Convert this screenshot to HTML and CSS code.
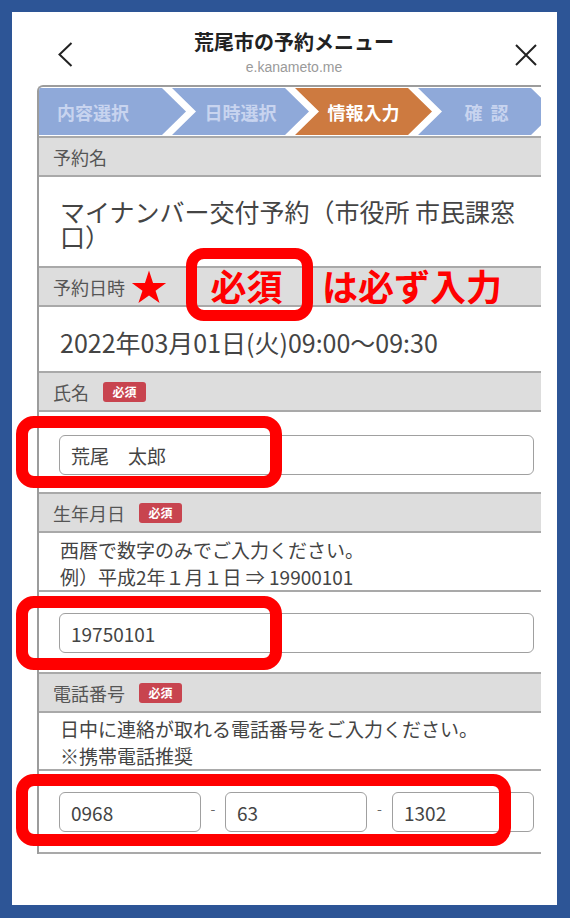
FILE: index.html
```html
<!DOCTYPE html>
<html lang="ja">
<head>
<meta charset="utf-8">
<title>荒尾市の予約メニュー</title>
<link rel="stylesheet" href="styles.css">
</head>
<body>
<div class="screen">
  <header class="topbar">
    <svg class="back" width="15" height="25" viewBox="0 0 15 25"><polyline points="13.5,1 1.5,12.5 13.5,24" fill="none" stroke="#222" stroke-width="2"/></svg>
    <div class="titles">
      <div class="title">荒尾市の予約メニュー</div>
      <div class="url">e.kanameto.me</div>
    </div>
    <svg class="close" width="22" height="22" viewBox="0 0 22 22"><path d="M1 1 L21 21 M21 1 L1 21" stroke="#222" stroke-width="2" fill="none"/></svg>
  </header>

  <div class="form">
    <div class="steps-wrap">
      <div class="steps">
        <div class="step first">内容選択</div>
        <div class="step">日時選択</div>
        <div class="step current">情報入力</div>
        <div class="step last">確 認</div>
      </div>
    </div>

    <div class="sec-head">予約名</div>
    <div class="sec-body big name-body">マイナンバー交付予約（市役所 市民課窓口）</div>

    <div class="sec-head">予約日時<svg class="star" width="36" height="34" viewBox="0 0 36 34"><polygon points="18,0.5 22.06,12.92 35.12,12.94 24.56,20.63 28.58,33.06 18,25.4 7.42,33.06 11.44,20.63 0.88,12.94 13.94,12.92" fill="#ff0000"/></svg></div>
    <div class="sec-body big date-body">2022年03月01日(火)09:00～09:30</div>

    <div class="sec-head">氏名<span class="badge">必須</span></div>
    <div class="sec-body input-body first-input">
      <input class="field" type="text" value="荒尾　太郎" readonly>
    </div>

    <div class="sec-head">生年月日<span class="badge">必須</span></div>
    <div class="sec-body help help1">西暦で数字のみでご入力ください。<br>例）平成2年１月１日 ⇒ 19900101</div>
    <div class="sec-body input-body second-input">
      <input class="field" type="text" value="19750101" readonly>
    </div>

    <div class="sec-head">電話番号<span class="badge">必須</span></div>
    <div class="sec-body help help2">日中に連絡が取れる電話番号をご入力ください。<br>※携帯電話推奨</div>
    <div class="sec-body phone-body">
      <input class="field tel" type="text" value="0968" readonly>
      <span class="dash">-</span>
      <input class="field tel" type="text" value="63" readonly>
      <span class="dash">-</span>
      <input class="field tel" type="text" value="1302" readonly>
    </div>
  </div>

  <div class="note-box">必須</div>
  <div class="note-text">は必ず入力</div>
  <div class="mark mark-name"></div>
  <div class="mark mark-birth"></div>
  <div class="mark mark-tel"></div>
</div>
</body>
</html>
```

FILE: styles.css
```css
html, body {
  margin: 0;
}
body {
  background: #2d5596;
  width: 570px;
  height: 918px;
  padding: 12px 13px 13px 12px;
  box-sizing: border-box;
  font-family: "Noto Sans CJK JP", "Noto Sans", sans-serif;
}
.screen {
  position: relative;
  background: #ffffff;
  height: 893px;
  overflow: hidden;
}

/* top bar */
.topbar {
  display: flex;
  height: 73px;
  padding: 0 20px 0 46px;
  box-sizing: border-box;
}
.back {
  flex: none;
  margin-top: 30px;
}
.titles {
  flex: 1;
  text-align: center;
  padding-top: 17px;
}
.title {
  font-size: 20px;
  line-height: 26px;
  font-weight: 700;
  color: #222;
}
.url {
  margin-top: 3px;
  font-family: "Liberation Sans", Arial, sans-serif;
  font-size: 14px;
  line-height: 18px;
  color: #9a9a9a;
}
.close {
  flex: none;
  margin-top: 32px;
}

/* form */
.form {
  margin-left: 25px;
  width: 504px;
  box-sizing: border-box;
  border-left: 2px solid #9c9c9c;
  border-top: 2px solid #9c9c9c;
  border-top-left-radius: 6px;
  overflow: hidden;
}
.steps-wrap {
  padding: 1px 0;
  border-bottom: 2px solid #a9a9a9;
}
.steps {
  display: flex;
  height: 47px;
}
.step {
  flex: none;
  width: 137px;
  margin-left: -14px;
  display: flex;
  align-items: center;
  justify-content: center;
  background: #8fa9d9;
  color: #c8d4ef;
  font-size: 18px;
  font-weight: 700;
  clip-path: polygon(0 0, calc(100% - 24px) 0, 100% 50%, calc(100% - 24px) 100%, 0 100%, 24px 50%);
}
.step.first {
  width: 147px;
  margin-left: 0;
  justify-content: flex-start;
  padding-left: 18px;
  box-sizing: border-box;
  clip-path: polygon(0 0, calc(100% - 24px) 0, 100% 50%, calc(100% - 24px) 100%, 0 100%);
}
.step.current {
  background: #cd7a40;
  color: #ffffff;
}
.step.last {
  word-spacing: 4px;
}

.sec-head {
  display: flex;
  align-items: center;
  height: 37px;
  padding-left: 14px;
  background: #dddddd;
  border-bottom: 2px solid #a9a9a9;
  font-size: 18px;
  color: #555;
}
.star {
  margin-left: 6px;
  margin-top: 1px;
}
.badge {
  margin-left: 14px;
  width: 43px;
  height: 20px;
  border-radius: 3px;
  background: #c8444f;
  color: #fff;
  font-size: 12px;
  font-weight: 700;
  display: flex;
  align-items: center;
  justify-content: center;
}
.sec-body {
  border-bottom: 2px solid #a9a9a9;
  color: #444;
  padding-left: 21px;
}
.big {
  font-size: 25px;
}
.name-body {
  line-height: 25px;
  padding: 22px 10px 17px 21px;
}
.date-body {
  line-height: 30px;
  padding-top: 20px;
  padding-bottom: 14px;
}
.help {
  font-size: 19px;
  line-height: 27px;
}
.help1 {
  padding-top: 3px;
}
.help2 {
  padding-top: 2px;
}
.input-body {
  padding-left: 20px;
  padding-right: 7px;
}
.first-input {
  padding-top: 23px;
  padding-bottom: 17px;
}
.second-input {
  padding-top: 21px;
  padding-bottom: 19px;
}
.field {
  display: block;
  width: 100%;
  height: 40px;
  box-sizing: border-box;
  margin: 0;
  border: 1.5px solid #a0a0a0;
  border-radius: 6px;
  padding: 0 0 0 11px;
  font-family: "Noto Sans CJK JP", "Noto Sans", sans-serif;
  font-size: 19px;
  color: #444;
  background: #fff;
  outline: none;
}
.phone-body {
  display: flex;
  align-items: center;
  padding-left: 20px;
  padding-top: 21px;
  padding-bottom: 20px;
}
.field.tel {
  width: 142px;
  flex: none;
}
.dash {
  flex: none;
  width: 24px;
  text-align: center;
  font-size: 14px;
  color: #666;
  margin-top: -8px;
}
.dash + .field + .dash {
  width: 25px;
}

/* red annotations over the screenshot */
.note-box {
  position: absolute;
  left: 174px;
  top: 236px;
  width: 127px;
  height: 73px;
  box-sizing: border-box;
  border: 11px solid #ff0000;
  border-radius: 18px;
  display: flex;
  align-items: center;
  justify-content: center;
  padding-right: 6px;
  color: #ff0000;
  font-size: 36px;
  font-weight: 700;
  line-height: 1;
}
.note-text {
  position: absolute;
  left: 310px;
  top: 253px;
  color: #ff0000;
  font-size: 36px;
  font-weight: 700;
  line-height: 40px;
}
.mark {
  position: absolute;
  left: 4px;
  width: 266px;
  box-sizing: border-box;
  border: 12px solid #ff0000;
  border-radius: 18px;
}
.mark-name {
  top: 404px;
  height: 72px;
}
.mark-birth {
  top: 584px;
  height: 74px;
}
.mark-tel {
  top: 762px;
  width: 495px;
  height: 72px;
}
```
